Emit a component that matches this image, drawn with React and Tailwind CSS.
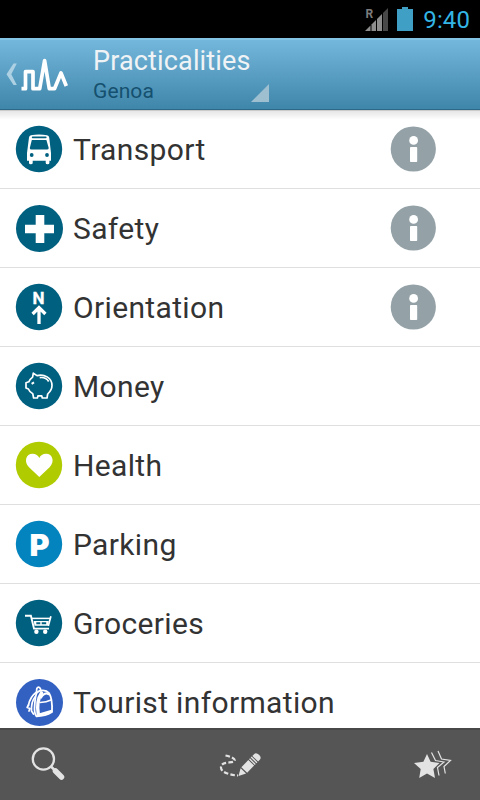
import React from 'react';

// list icons, all drawn on a 48x48 grid

function Disc({ color, big, children }) {
  return (
    <svg viewBox="0 0 48 48" className="h-12 w-12 shrink-0">
      <circle cx={big ? 24.5 : 24} cy={big ? 24.5 : 24} r={big ? 23.5 : 23.2} fill={color} />
      {children}
    </svg>
  );
}

function BusIcon() {
  return (
    <Disc color="#006080">
      <path d="M14 12.5Q14.200 10.500 16 10.200Q24 8.800 32 10.200Q34 10.500 34.200 12.500L36 28V35.800H34.400V38Q34.400 39.300 32.600 39.300Q30.700 39.300 30.700 38V35.800H17.700V38Q17.700 39.300 15.800 39.300Q14 39.300 14 38V35.800H12V28Z" fill="#fff" />
      <rect x="16.800" y="11.600" width="14.800" height="1.700" rx="0.800" fill="#006080" />
      <path d="M16.800 15H31.400L33.700 23Q33.700 24.600 32 24.600H16.300Q14.800 24.600 14.800 23Z" fill="#006080" />
      <circle cx="16.700" cy="30" r="1.900" fill="#006080" />
      <circle cx="32" cy="30" r="1.900" fill="#006080" />
    </Disc>
  );
}

function PlusIcon() {
  return (
    <Disc color="#006080" big>
      <path d="M20.700 11H29.300V20.700H39V29.300H29.300V39H20.700V29.300H10V20.700H20.700Z" fill="#fff" />
    </Disc>
  );
}

function NorthIcon() {
  return (
    <Disc color="#006080">
      <text x="23.600" y="20.600" textAnchor="middle" fontSize="17" fontWeight="700" fontFamily="Roboto, sans-serif" fill="#fff" stroke="#fff" strokeWidth="0.300">N</text>
      <path d="M24 41V25M17.600 31L24 24.600L30.400 31" fill="none" stroke="#fff" strokeWidth="3.300" />
    </Disc>
  );
}

function PiggyIcon() {
  return (
    <Disc color="#006080">
      <g fill="none" stroke="#fff" strokeWidth="1.700" strokeLinejoin="round">
        <path d="M18.300 11.200L22 13.600C29 11.800 37 15.500 37 23.500C37 27.500 34.800 30 32.700 32L32 36H27.300L26.700 33.800H23L22.400 36H18.600L17.800 31.800C15.500 30.800 14.200 29 13.400 27L11 26V20.700L13.800 19.800C14.600 18 16 16.500 17.600 15.200Z" />
        <path d="M24.700 15.600C28.500 15.200 32 16.600 33.700 19.500" />
        <path d="M16.600 21.800L19 20.400" strokeWidth="2" />
      </g>
    </Disc>
  );
}

function HeartIcon() {
  return (
    <Disc color="#b0cc00">
      <path d="M24.300 36L14 26.300C8.500 20.500 11 12.700 17.500 12.700C20.800 12.700 23.300 14.500 24.300 17C25.300 14.500 27.800 12.700 31.100 12.700C37.600 12.700 40.100 20.500 34.600 26.300Z" fill="#fff" />
    </Disc>
  );
}

function ParkingIcon() {
  return (
    <Disc color="#0384bf">
      <text x="14.400" y="36" fontSize="30.500" fontWeight="900" fontFamily="Inter, sans-serif" fill="#fff">P</text>
    </Disc>
  );
}

function CartIcon() {
  return (
    <Disc color="#006080">
      <g fill="none" stroke="#fff">
        <path d="M10 16.800H15.900L19 29.600H34" strokeWidth="1.900" />
        <path d="M35.900 17.200L33.300 27" strokeWidth="1.700" />
        <path d="M16.800 19.400H35" strokeWidth="1.500" />
      </g>
      <path d="M18.700 21.900H33.800L32.800 26.800H19.500ZM21.300 23.200V25.300H25.300V23.200ZM26.700 23.200V25.300H31.200V23.200Z" fill="#fff" fillRule="evenodd" />
      <circle cx="21.400" cy="32.800" r="2.200" fill="#fff" />
      <circle cx="30.200" cy="32.800" r="2.200" fill="#fff" />
    </Disc>
  );
}

function BackpackIcon() {
  return (
    <Disc color="#3361c2" big>
      <g fill="none" stroke="#fff" strokeLinecap="round" strokeLinejoin="round">
        <path d="M21.500 14L21.800 10.500Q23.500 7.600 25.300 10.500L26 13" strokeWidth="1.700" />
        <path d="M22 14.500C25 11.500 31 11.500 34 15C36.500 19 37.400 26 37 34C33 36.500 27 38.200 21.500 38.300C19.500 36 19.200 32 19.700 27C20 21 20.500 17 22 14.500Z" strokeWidth="1.800" />
        <path d="M23.300 36.500C22.100 29 22.500 21 26.500 15" strokeWidth="3.400" />
        <path d="M25 24.600C29 24.400 33 23.600 36 22" strokeWidth="1.500" />
        <path d="M26 19.500C27.500 16 31 14.600 33.500 16" strokeWidth="2.200" />
        <path d="M25 36.500L36 33.300" strokeWidth="2.800" />
        <path d="M21 14.500C17 17.500 14.500 22 13.500 27M20 19C17.500 22 16.300 27 16.500 33L18.500 36" strokeWidth="1.700" />
        <path d="M13.500 27L12.200 29.500L15 30.500L14 33" strokeWidth="1.800" />
      </g>
    </Disc>
  );
}

function InfoButton() {
  return (
    <svg viewBox="0 0 46 46" className="mr-[44px] h-[46px] w-[46px] shrink-0">
      <circle cx="23.300" cy="23" r="22.600" fill="#94a2a8" />
      <circle cx="23.600" cy="14.400" r="4.400" fill="#fff" />
      <rect x="20" y="21" width="7.200" height="15" rx="0.800" fill="#fff" />
    </svg>
  );
}

const items = [
  { label: 'Transport', Icon: BusIcon, info: true },
  { label: 'Safety', Icon: PlusIcon, info: true },
  { label: 'Orientation', Icon: NorthIcon, info: true },
  { label: 'Money', Icon: PiggyIcon },
  { label: 'Health', Icon: HeartIcon },
  { label: 'Parking', Icon: ParkingIcon },
  { label: 'Groceries', Icon: CartIcon },
  { label: 'Tourist information', Icon: BackpackIcon },
];

function StatusBar() {
  return (
    <div className="flex h-[38px] shrink-0 items-center justify-end bg-black pr-[10px]">
      <svg viewBox="0 0 24 24" className="mr-[8px] h-6 w-6">
        <path d="M0 24L5.500 18.500V24Z" fill="#8d8d8d" />
        <path d="M6.500 17.500L11 13V24H6.500Z" fill="#8d8d8d" />
        <path d="M12 12L17 7V24H12Z" fill="#8d8d8d" />
        <path d="M18 6L23 1V24H18Z" fill="#484848" />
        <text x="0.500" y="10.500" fontSize="12" fontWeight="700" fontFamily="Roboto, sans-serif" fill="#7c7c7c">R</text>
      </svg>
      <svg viewBox="0 0 16 24" className="mr-[10px] h-6 w-4">
        <path d="M5 0H11V2H16V24H0V2H5Z" fill="#409fc5" />
      </svg>
      <span className="pt-px text-2xl leading-none tracking-[0.1px] text-[#33b5e5]">9:40</span>
    </div>
  );
}

function Header() {
  return (
    <header className="flex h-[72px] shrink-0 border-t-2 border-b border-t-[#83c3e4] border-b-[#2d6888] bg-linear-to-b from-[#74b7dc] to-[#3e86aa]">
      <svg viewBox="0 0 80 70" className="h-[70px] w-20 shrink-0">
        <path d="M13.500 23.500H16.800L11.300 34.200L16.800 45H13.500L6.500 34.200Z" fill="#add1e3" />
        <path d="M21.500 48.700H25.500V31.700H33V48.700H39.700L44.600 20.500L49.300 48.700H54.500L61 33L66.300 46" fill="none" stroke="#fff" strokeWidth="3.700" strokeLinejoin="round" />
      </svg>
      <div className="ml-[13px] flex w-44 flex-col pt-1">
        <span className="text-[27px] leading-[34px] tracking-[0.15px] whitespace-nowrap text-[#f0f3f5]">Practicalities</span>
        <div className="flex items-end justify-between">
          <span className="text-[21px] leading-[26px] tracking-[0.1px] text-[#15506f]">Genoa</span>
          <svg viewBox="0 0 18 18" className="mb-[2px] h-[18px] w-[18px]">
            <path d="M18 0V18H0Z" fill="#9dbfcf" />
          </svg>
        </div>
      </div>
    </header>
  );
}

function Toolbar() {
  return (
    <nav className="flex h-[72px] shrink-0 items-center justify-between border-t-2 border-[#484848] bg-[#555] px-6">
      <svg viewBox="0 0 48 48" className="h-12 w-12">
        <circle cx="19.400" cy="18" r="10.600" fill="none" stroke="#e3e3e3" strokeWidth="2.300" />
        <path d="M26.500 25L31 29.500" stroke="#e3e3e3" strokeWidth="2.500" />
        <path d="M31.500 30L37.500 36" stroke="#e3e3e3" strokeWidth="5.500" strokeLinecap="round" />
      </svg>
      <svg viewBox="0 0 48 48" className="h-12 w-12">
        <path d="M9.500 14.500C14 15.500 20 17.500 18.500 20C16.500 22.500 5.500 20 5 26C4.500 31 13 34 22 34.500" fill="none" stroke="#e3e3e3" strokeWidth="2.200" strokeDasharray="4.500 2.200" />
        <g transform="translate(22.500 35) rotate(-46)" fill="#e3e3e3">
          <path d="M0 0L7 -3.800V3.800Z" />
          <path d="M8.300 -4H18.300V4H8.300Z" />
          <path d="M19.300 -4H20.700V4H19.300ZM21.700 -4H23.100V4H21.700Z" />
          <path d="M24.100 -4H26.500Q29.500 -4 29.500 0Q29.500 4 26.500 4H24.100Z" />
        </g>
      </svg>
      <svg viewBox="0 0 48 48" className="h-12 w-12">
        <path d="M19 13L22.600 20.800L31.500 22L25.400 28L27 37L19 32.600L11.200 37L12.700 28L6 22L15.400 20.800Z" fill="#e3e3e3" />
        <path d="M23.500 11.500L27.500 19.500L36 21L29.500 26.500L31 34.500M30 10L33.500 18L42.500 19.500L36 25.500L37.300 32.500" fill="none" stroke="#e3e3e3" strokeWidth="1.200" />
      </svg>
    </nav>
  );
}

function App() {
  return (
    <div className="flex h-[800px] w-[480px] flex-col overflow-hidden bg-white font-['Roboto',sans-serif]">
      <StatusBar />
      <Header />
      <main className="relative min-h-0 flex-1 overflow-hidden">
        <div className="absolute inset-x-0 top-0 h-2.5 border-t border-black/20 bg-linear-to-b from-black/10 to-transparent" />
        <ul>
          {items.map(({ label, Icon, info }) => (
            <li key={label} className="flex h-[79px] items-center border-b border-[#dfdfdf] pl-[15px]">
              <Icon />
              <span className="ml-[10px] flex-1 pt-0.5 text-[30px] leading-none tracking-[0.35px] whitespace-nowrap text-[#333]">{label}</span>
              {info && <InfoButton />}
            </li>
          ))}
        </ul>
      </main>
      <Toolbar />
    </div>
  );
}

export default App;
